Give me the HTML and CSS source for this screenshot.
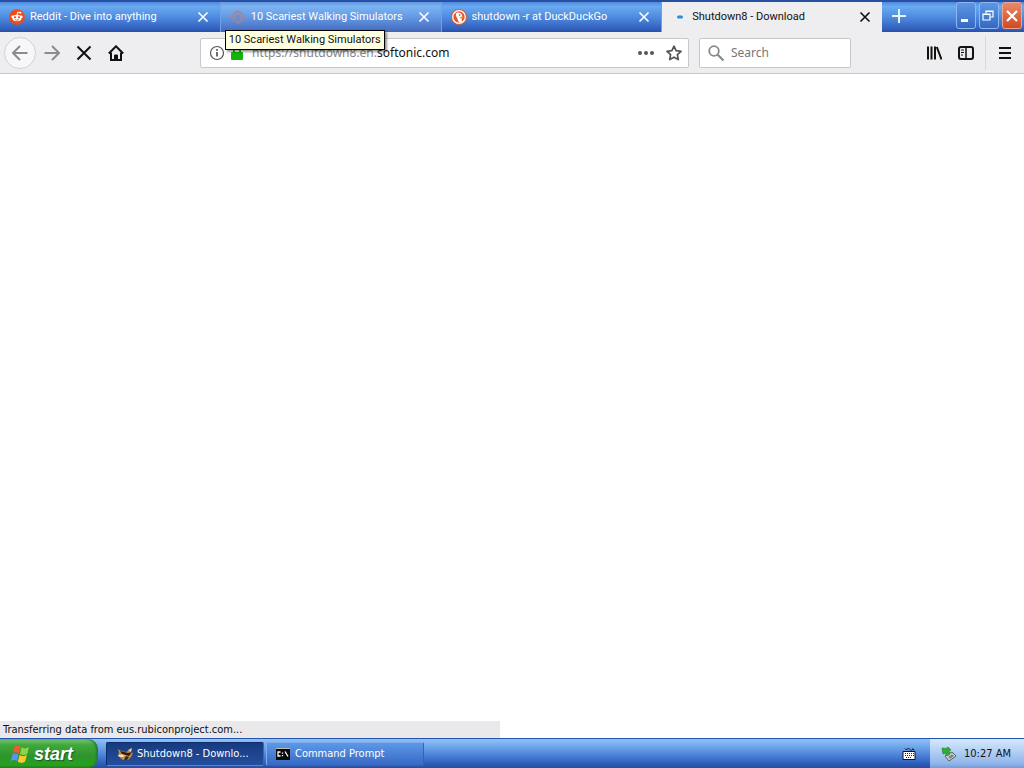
FILE: index.html
```html
<!DOCTYPE html>
<html lang="en">
<head>
<meta charset="utf-8">
<title>Shutdown8 - Download</title>
<link rel="stylesheet" href="styles.css">
</head>
<body>
<header class="titlebar">
  <div class="tabs" role="tablist">
    <div class="tab">
      <svg class="favicon" viewBox="0 0 16 16"><circle cx="8" cy="8" r="7.800" fill="#f04a16"/><circle cx="3.600" cy="7.800" r="1.300" fill="#fff"/><circle cx="12.400" cy="7.800" r="1.300" fill="#fff"/><ellipse cx="8" cy="9" rx="4.600" ry="3.200" fill="#fff"/><path d="M8 6l.8-3 2.400.5" fill="none" stroke="#fff"/><circle cx="11.400" cy="3.700" r="1" fill="#fff"/><circle cx="6" cy="8.300" r="1.100" fill="#f04a16"/><circle cx="10" cy="8.300" r="1.100" fill="#f04a16"/><path d="M6 10.600q2 1.300 4 0" fill="none" stroke="#f04a16" stroke-width=".8"/></svg>
      <span class="tab-title">Reddit - Dive into anything</span>
      <button class="tab-close" aria-label="Close tab"><svg viewBox="0 0 12 12"><path d="M1.500 1.500l9 9M10.500 1.500l-9 9"/></svg></button>
    </div>
    <div class="tab tab-hover">
      <svg class="favicon" viewBox="0 0 16 16" opacity=".8"><circle cx="8" cy="8" r="5" fill="none" stroke="#ab8292" stroke-width="2.400"/><path d="M0 8h4M12 8h4M8 1v3M8 12v3" stroke="#b0828c" stroke-width="1.600"/><circle cx="8" cy="8" r="2.500" fill="#778bc2"/></svg>
      <span class="tab-title">10 Scariest Walking Simulators</span>
      <button class="tab-close" aria-label="Close tab"><svg viewBox="0 0 12 12"><path d="M1.500 1.500l9 9M10.500 1.500l-9 9"/></svg></button>
      <div class="tooltip" role="tooltip">10 Scariest Walking Simulators</div>
    </div>
    <div class="tab">
      <svg class="favicon" viewBox="0 0 16 16"><circle cx="8" cy="8" r="8" fill="#dc5b35"/><circle cx="8" cy="8" r="6.300" fill="#dc5b35" stroke="#fff" stroke-width="1.300"/><path d="M4.800 4.500Q6 2.800 9 3.700q2.500 1.100 2.200 3.500L10.500 9l.5 4-3 .8L6.300 9.500Q4.500 6.400 4.800 4.500z" fill="#fff"/><path d="M8.700 8q2-.8 3.800-.2-.6 1.800-3.700 1.800z" fill="#f4a52f"/><circle cx="8.700" cy="6" r=".7" fill="#49404a"/></svg>
      <span class="tab-title">shutdown -r at DuckDuckGo</span>
      <button class="tab-close" aria-label="Close tab"><svg viewBox="0 0 12 12"><path d="M1.500 1.500l9 9M10.500 1.500l-9 9"/></svg></button>
    </div>
    <div class="tab tab-active">
      <svg class="favicon" viewBox="0 0 16 16"><rect x="5" y="6.500" width="6" height="3" rx="1.500" fill="#2e8be0"/></svg>
      <span class="tab-title">Shutdown8 - Download</span>
      <button class="tab-close" aria-label="Close tab"><svg viewBox="0 0 12 12"><path d="M1.500 1.500l9 9M10.500 1.500l-9 9"/></svg></button>
    </div>
  </div>
  <div class="window-side">
    <button class="new-tab" aria-label="New tab"><svg viewBox="0 0 16 16"><path d="M8 1v14M1 8h14" fill="none" stroke="#e4f3ff" stroke-width="2"/></svg></button>
    <div class="window-buttons">
      <button class="win" aria-label="Minimize"><svg viewBox="0 0 18 24"><path d="M4 16.500h7" stroke="#fff" stroke-width="3"/></svg></button>
      <button class="win" aria-label="Restore"><svg viewBox="0 0 18 24" fill="none" stroke="#fff" stroke-width="1.200"><path d="M6 9.500V7h7v6h-2.500M6 7.500h7"/><path d="M3 10h7v6H3zM3 10.500h7"/></svg></button>
      <button class="win win-close" aria-label="Close"><svg viewBox="0 0 18 24"><path d="M4 7l10 10M14 7L4 17" stroke="#fff" stroke-width="2.200"/></svg></button>
    </div>
  </div>
</header>
<nav class="toolbar">
  <div class="nav-buttons">
    <button class="back" aria-label="Back"><svg viewBox="0 0 16 16"><path d="M15.500 8H1M8 1L1 8l7 7"/></svg></button>
    <button class="tool forward" aria-label="Forward"><svg viewBox="0 0 16 16"><path d="M.5 8H15M8 1l7 7-7 7"/></svg></button>
    <button class="tool" aria-label="Stop"><svg viewBox="0 0 16 16"><path d="M1.500 1.500l13 13M14.500 1.500l-13 13"/></svg></button>
    <button class="tool" aria-label="Home"><svg viewBox="0 0 16 16"><path d="M.8 8.500L8 1.300l7.200 7.200"/><path d="M3 7.500V15h10V7.500"/><path d="M6.500 15v-5h3v5z" fill="#111" stroke-width="1"/></svg></button>
  </div>
  <div class="address">
    <svg class="info" viewBox="0 0 16 16"><circle cx="8" cy="8" r="6.500" fill="none" stroke="#555" stroke-width="1.200"/><path d="M8 7v4.500M8 4v1.700" stroke="#555" stroke-width="1.700"/></svg>
    <svg class="lock" viewBox="0 0 14 16"><path d="M4 8V5a3 3 0 0 1 6 0v3" fill="none" stroke="#12bc00" stroke-width="2"/><rect x="1" y="7" width="12" height="8" rx="1" fill="#12b40a"/></svg>
    <div class="url"><span>https://shutdown8.en.</span>softonic.com</div>
    <button class="field-button" aria-label="Page actions"><svg viewBox="0 0 16 16" fill="#555"><circle cx="2" cy="8" r="2"/><circle cx="8" cy="8" r="2"/><circle cx="14" cy="8" r="2"/></svg></button>
    <button class="field-button" aria-label="Bookmark"><svg viewBox="0 0 16 16"><path d="M8 1.200l2.100 4.500 4.900.6-3.600 3.400.9 4.900L8 12.200l-4.300 2.400.9-4.900L1 6.300l4.900-.6z" fill="none" stroke="#555" stroke-width="1.700" stroke-linejoin="round"/></svg></button>
  </div>
  <label class="search">
    <svg viewBox="0 0 16 16" fill="none" stroke="#888"><circle cx="6" cy="6" r="4.800" stroke-width="1.800"/><path d="M9.500 9.500l6 6" stroke-width="2.200"/></svg>
    <input type="text" placeholder="Search" aria-label="Search">
  </label>
  <div class="tools">
    <button class="tool" aria-label="Library"><svg viewBox="0 0 16 16"><path d="M2 1.500v13M5.500 1.500v13M9 1.500v13M10.800 2l4.700 12.500"/></svg></button>
    <button class="tool" aria-label="Sidebars"><svg viewBox="0 0 16 16"><rect x="1" y="2" width="14" height="12" rx="2"/><path d="M8 2v12" stroke-width="1.500"/><path d="M3 5h3M3 7.500h3M3 10h2" stroke-width="1"/></svg></button>
    <button class="tool menu" aria-label="Menu"><svg viewBox="0 0 16 16"><path d="M2 3h12M2 8h12M2 13h12"/></svg></button>
  </div>
</nav>
<main class="page"><div class="status" role="status">Transferring data from eus.rubiconproject.com...</div></main>
<footer class="taskbar">
  <button class="start"><svg viewBox="0 0 18 18"><path d="M4 2.500q2.500-2 5.500 0L8 8.500q-3-2-5.500 0z" fill="#ef5b2c"/><path d="M10.500 3q2.500 2 6.500 0L15.500 9q-3 2-6.500 0z" fill="#8ed443"/><path d="M2.200 9.500q2.500-2 5.500 0L6.200 15.500q-2.500-2-5.700 0z" fill="#5a93f0"/><path d="M8.700 10q3 2 6.500 0L13.500 16q-3 2-6.500 0z" fill="#fbc92d"/></svg>start</button>
  <button class="task task-active"><svg viewBox="0 0 16 16"><path d="M1 3l3 2 5 1 5-3v3l2 1-2 4-3 3H6l-3-2 1-2-3-1 1-2z" fill="#c58a3b"/><path d="M3 5l4 1 4 1 4-1-3 4-3-1-4-1z" fill="#261d18"/><path d="M1 9l4-.5 3 1-2 1.500H2z" fill="#f2dfb4"/><path d="M9 10l3 1-2 3H7z" fill="#33271f"/><path d="M11 4l4-2-1 4z" fill="#ecd39a"/></svg><span>Shutdown8 - Downlo...</span></button>
  <button class="task"><svg viewBox="0 0 16 16"><rect x="1" y="2" width="14" height="12" fill="#080808"/><path d="M1 2.500h14" stroke="#bbb"/><path d="M5.500 6H3v4h2.500M7.500 6.500v1.200M7.500 9v1.200M10 5.500l3 5" fill="none" stroke="#fff" stroke-width="1.300"/></svg><span>Command Prompt</span></button>
  <svg class="keyboard" viewBox="0 0 14 14"><path d="M3 1.500q1 2 2.500.5t2.500.5 2 0 2 1" fill="none" stroke="#111"/><path d="M1 4.500h12v8H1z" fill="#fff" stroke="#111"/><path d="M3 6.500h9M3 8.500h9M4 10.500h6" stroke="#222" stroke-dasharray="1 1"/></svg>
  <div class="tray">
    <svg viewBox="0 0 16 16"><path d="M4 10l7-4 4 4-7 5z" fill="#d5d9d2" stroke="#555b60"/><path d="M7 11l4-3 2 2-4 3z" fill="#7c8791"/><path d="M1 2l4 .5L7 1l3 3-2 1 1 3-3 2-2-3-2 1z" fill="#2fae34" stroke="#1c7b25" stroke-width=".6"/></svg>
    <time>10:27 AM</time>
  </div>
</footer>
</body>
</html>
```

FILE: styles.css
```css
* { box-sizing: border-box; }

body {
  margin: 0;
  height: 100vh;
  display: flex;
  flex-direction: column;
  overflow: hidden;
  background: #fff;
  color: #111;
  font: 11px/16px "DejaVu Sans Condensed", "Noto Sans", sans-serif;
}

button {
  padding: 0;
  border: 0;
  background: none;
  color: inherit;
  font: inherit;
  display: flex;
  align-items: center;
  justify-content: center;
}

svg { display: block; flex: none; }

.titlebar {
  display: flex;
  height: 32px;
  flex: none;
  border-top: 2px solid #2750a2;
  background: linear-gradient(#5089e0, #69aaf0 15%, #4f8ce0 50%, #315fbd 90%, #2a50a5);
  font-family: Roboto, "Noto Sans", sans-serif;
}

.tabs { display: flex; flex: 1; min-width: 0; }

.tab {
  position: relative;
  flex: 1;
  min-width: 0;
  display: flex;
  align-items: center;
  padding: 0 11px 0 9px;
  color: #fff;
  border-right: 1px solid #6fa1e8;
}

.tab-hover { background: rgba(255, 255, 255, 0.12); }

.tab-active { background: #eeedef; color: #111; border-right: 0; }

.favicon { width: 16px; height: 16px; margin-right: 5px; }

.tab-active .favicon { margin-left: 1px; margin-right: 4px; }

.tab-title { flex: 1; min-width: 0; white-space: nowrap; overflow: hidden; }

.tab-close svg { width: 12px; height: 12px; fill: none; stroke: currentColor; stroke-width: 1.6; }

.tooltip {
  position: absolute;
  left: 4px;
  top: 28px;
  z-index: 2;
  padding: 1px 3px;
  border: 1px solid #000;
  background: #ffffe1;
  color: #111;
  white-space: nowrap;
  box-shadow: 2px 2px 2px rgba(0, 0, 0, 0.4);
}

.window-side { flex: none; display: flex; justify-content: space-between; width: 142px; padding: 0 2px 2px 9px; }

.new-tab svg { width: 16px; height: 16px; }

.window-buttons { display: flex; gap: 3px; }

.win {
  width: 20px;
  height: 27px;
  border: 1px solid #8fb6f0;
  border-radius: 3px;
  background: linear-gradient(#5d97e4, #3469c3);
}

.win svg { width: 18px; height: 24px; }

.win-close { border-color: #efa58e; background: linear-gradient(#e8896b, #cf4a22); }

.toolbar {
  display: flex;
  align-items: center;
  flex: none;
  height: 42px;
  padding-left: 4px;
  background: #eeedef;
  border-bottom: 1px solid #c8c8ca;
}

.nav-buttons { display: flex; align-items: center; width: 196px; }

.back {
  width: 32px;
  height: 32px;
  border: 1px solid #d2d2d4;
  border-radius: 50%;
  background: #f7f6f8;
}

.back svg, .tool svg { width: 16px; height: 16px; fill: none; stroke: #111; stroke-width: 2; }

.back svg, .forward svg { stroke: #8c8c8e; }

.tool { width: 32px; height: 32px; }

.address, .search {
  display: flex;
  align-items: center;
  height: 30px;
  border: 1px solid #c8c8ca;
  border-radius: 2px;
  background: #fff;
}

.address { flex: 1; min-width: 0; padding: 0 6px 0 8px; }

.info { width: 16px; height: 16px; }

.lock { width: 14px; height: 16px; margin-left: 5px; }

.url { flex: 1; min-width: 0; margin-left: 8px; font: 12px/18px "Noto Sans", sans-serif; white-space: nowrap; overflow: hidden; }

.url span { color: #858585; }

.field-button { margin-left: 12px; }

.field-button svg { width: 16px; height: 16px; }

.search { width: 152px; margin-left: 10px; padding-left: 8px; }

.search svg { width: 16px; height: 16px; }

.search input {
  flex: 1;
  min-width: 0;
  height: 28px;
  margin-left: 7px;
  padding: 0;
  border: 0;
  outline: 0;
  background: none;
  font: 12px/18px "Noto Sans", sans-serif;
}

.search input::placeholder { color: #777; opacity: 1; }

.tools { display: flex; align-items: center; margin-left: 67px; }

.menu { width: 39px; height: 34px; margin-left: 3px; border-left: 1px solid #d8d8da; }

.page { flex: 1; min-height: 0; display: flex; align-items: flex-end; background: #fff; }

.status { width: 500px; height: 17px; padding-left: 3px; background: #e9e8eb; line-height: 18px; }

.taskbar {
  display: flex;
  align-items: center;
  flex: none;
  height: 30px;
  border-top: 1px solid #2454b0;
  background: linear-gradient(#8fc2f7, #77adee 20%, #4c84d9 55%, #2d5dba 85%, #264e9f);
  color: #fff;
}

.start {
  width: 98px;
  height: 29px;
  gap: 4px;
  padding-right: 15px;
  border-radius: 0 10px 10px 0;
  background: linear-gradient(#7cc877, #41a83e 20%, #2d942b 60%, #25a31f 90%, #1f7e1d);
  box-shadow: inset -2px 0 2px #2a7a35;
  font: italic bold 18px/22px "Liberation Sans", sans-serif;
  text-shadow: 1px 1px 1px #1c5520;
}

.start svg { width: 20px; height: 20px; }

.task {
  justify-content: flex-start;
  gap: 4px;
  width: 158px;
  height: 24px;
  margin-left: 2px;
  padding-left: 8px;
  border: 1px solid #6f9fe6;
  border-color: #7eaeee #3263b9 #3263b9 #7eaeee;
  border-radius: 2px;
  background: linear-gradient(#5d98e6, #3669c5);
}

.task-active {
  margin-left: 8px;
  padding-left: 10px;
  border-color: #0f2c68 #3c66b0 #5885cc #0f2c68;
  background: linear-gradient(#173a7e, #244f9e);
}

.task svg { width: 16px; height: 16px; }

.keyboard { width: 14px; height: 14px; margin-left: auto; margin-right: 14px; }

.tray {
  display: flex;
  align-items: center;
  gap: 7px;
  height: 29px;
  padding: 0 13px 0 11px;
  background: linear-gradient(#d4e8fb, #b4d1f5 40%, #90b5ea 85%, #739bda);
  color: #111;
}

.tray svg { width: 16px; height: 16px; }
```
